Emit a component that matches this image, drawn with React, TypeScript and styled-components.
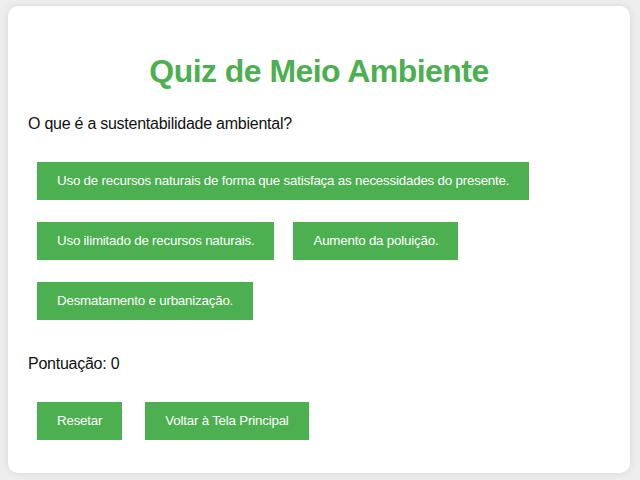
import React from "react";
import styled, { createGlobalStyle } from "styled-components";

const GlobalStyle = createGlobalStyle`
  html, body {
    margin: 0;
    padding: 0;
    background: #eeeeee;
    font-family: "Liberation Sans", Arial, sans-serif;
  }
  body {
    padding: 6px 10px 9px 8px;
  }
`;

const Card = styled.div`
  background: #ffffff;
  border-radius: 10px;
  box-shadow: 0 0 8px rgba(0, 0, 0, 0.1);
  padding: 20px 20px 22px 20px;
  display: flex;
  flex-direction: column;
`;

const Title = styled.h1`
  margin: 27px 0 0 0;
  font-size: 32px;
  line-height: 37px;
  font-weight: bold;
  color: #4caf50;
  text-align: center;
  letter-spacing: -0.55px;
`;

const Text = styled.p<{ $top: number }>`
  margin: ${(p) => p.$top}px 0 0 0;
  font-size: 16px;
  line-height: 18px;
  color: #111;
  letter-spacing: -0.25px;
`;

const ButtonRow = styled.div<{ $top: number; $gap: number }>`
  display: flex;
  flex-wrap: wrap;
  margin-top: ${(p) => p.$top}px;
  column-gap: ${(p) => p.$gap}px;
  padding-left: 9px;
`;

const Button = styled.button`
  margin: 11px 0;
  padding: 11px 20px;
  border: none;
  background: #4caf50;
  color: #ffffff;
  font-family: "Liberation Sans", Arial, sans-serif;
  font-size: 13.333px;
  line-height: 16px;
  letter-spacing: -0.2px;
  cursor: pointer;
`;

const options = [
  "Uso de recursos naturais de forma que satisfaça as necessidades do presente.",
  "Uso ilimitado de recursos naturais.",
  "Aumento da poluição.",
  "Desmatamento e urbanização.",
];

export default function App() {
  return (
    <>
      <GlobalStyle />
      <Card>
        <Title>Quiz de Meio Ambiente</Title>
        <Text $top={25}>O que é a sustentabilidade ambiental?</Text>
        <ButtonRow $top={18} $gap={19}>
          {options.map((o) => (
            <Button key={o}>{o}</Button>
          ))}
        </ButtonRow>
        <Text $top={24}>Pontuação: 0</Text>
        <ButtonRow $top={18} $gap={23}>
          <Button>Resetar</Button>
          <Button>Voltar à Tela Principal</Button>
        </ButtonRow>
      </Card>
    </>
  );
}
